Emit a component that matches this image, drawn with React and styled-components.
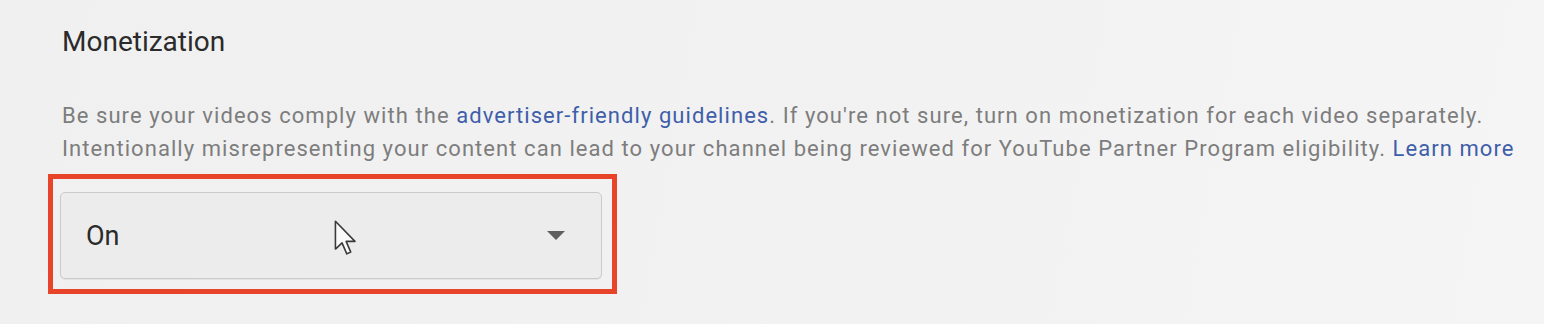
import React from "react";
import styled, { createGlobalStyle } from "styled-components";

const GlobalStyle = createGlobalStyle`
  html, body {
    margin: 0;
    padding: 0;
    background: #f1f1f1;
  }
  body {
    font-family: Roboto, "Liberation Sans", Arial, sans-serif;
  }
`;

const Page = styled.div`
  width: 1544px;
  height: 324px;
  box-sizing: border-box;
  padding: 26px 0 0 62px;
  overflow: hidden;
  background: linear-gradient(100deg, #f0f0f0 0%, #f2f2f2 60%, #f5f5f5 100%);
`;

const Title = styled.h2`
  margin: 0;
  font-size: 28px;
  line-height: 32px;
  font-weight: 400;
  color: #2b2b2b;
`;

const Description = styled.p`
  margin: 42px 0 0;
  font-size: 22px;
  line-height: 32.5px;
  letter-spacing: 1.06px;
  white-space: nowrap;
  color: #7d7d7d;
`;

const TextLink = styled.a`
  color: #3f5ea9;
  text-decoration: none;
  cursor: pointer;
`;

const Highlight = styled.div`
  margin: 9px 0 0 -14px;
  width: 569px;
  box-sizing: border-box;
  border: 5px solid #e8442a;
  padding: 13px 10px 10px 7px;
`;

const Select = styled.div`
  position: relative;
  display: flex;
  align-items: center;
  justify-content: space-between;
  height: 87px;
  box-sizing: border-box;
  padding: 0 36px 0 25px;
  border: 1.5px solid #cbcbcb;
  border-radius: 5px;
  background: #ececec;
  box-shadow: 0 1px 1px rgba(0, 0, 0, 0.06);
`;

const Value = styled.span`
  font-size: 27px;
  color: #2a2a2a;
`;

const Caret = styled.span`
  width: 0;
  height: 0;
  border-left: 9px solid transparent;
  border-right: 9px solid transparent;
  border-top: 9px solid #5f5f5f;
`;

const Pointer = styled.svg`
  position: absolute;
  left: 273px;
  top: 27px;
`;

const MousePointer = () => (
  <Pointer width="24" height="37" viewBox="0 0 18 28">
    <path
      d="M1 1 L1 22 L6 17.3 L9.6 25.6 L12.6 24.3 L9.1 16.2 L15.8 16.2 Z"
      fill="#fafafa"
      stroke="#3a3a3a"
      strokeWidth="1.2"
      strokeLinejoin="round"
    />
  </Pointer>
);

const App = () => {
  return (
    <Page>
      <GlobalStyle />
      <Title>Monetization</Title>
      <Description>
        Be sure your videos comply with the{" "}
        <TextLink>advertiser-friendly guidelines</TextLink>. If you're not
        sure, turn on monetization for each video separately.
        <br />
        Intentionally misrepresenting your content can lead to your channel
        being reviewed for YouTube Partner Program eligibility.{" "}
        <TextLink>Learn more</TextLink>
      </Description>
      <Highlight>
        <Select>
          <Value>On</Value>
          <Caret />
          <MousePointer />
        </Select>
      </Highlight>
    </Page>
  );
};

export default App;
